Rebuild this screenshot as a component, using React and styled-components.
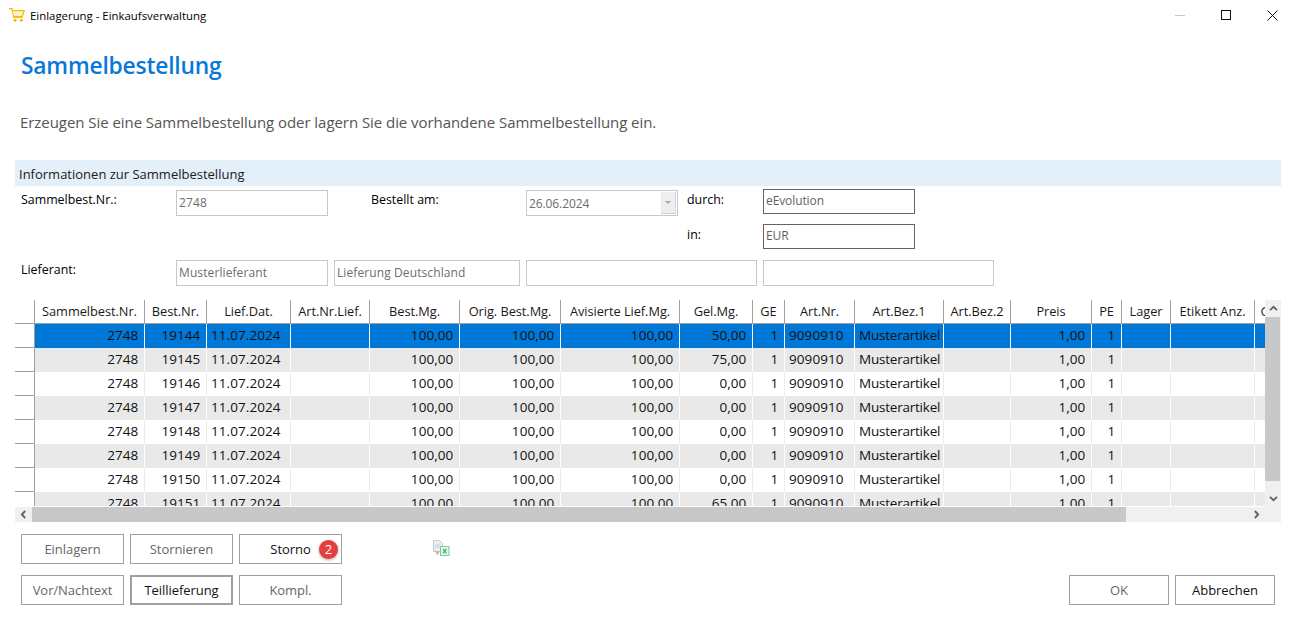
import React from 'react';
import styled, { createGlobalStyle, css } from 'styled-components';

const Global = createGlobalStyle`
  html, body { margin: 0; padding: 0; background: #fff; }
  body { font-family: "Open Sans", "Noto Sans", "Liberation Sans", sans-serif; color: #000; }
  * { box-sizing: border-box; }
`;

const Page = styled.div`
  width: 1296px; height: 628px; overflow: hidden; background: #fff;
  display: flex; flex-direction: column;
`;
const TitleBar = styled.header`
  height: 32px; flex: none; display: flex; align-items: center; padding-left: 9px;
`;
const CartIcon = styled.svg` width: 16px; height: 14px; margin-right: 5px; margin-top: -2px; flex: none; `;
const WindowTitle = styled.span` font-size: 11.4px; line-height: 14px; flex: 1; `;
const WinButton = styled.button`
  width: 46px; height: 30px; border: 0; padding: 0; background: none;
  display: flex; align-items: center; justify-content: center;
`;
const WinButtons = styled.div` display: flex; margin: -2px 1px 0 0; `;

const Heading = styled.h1`
  margin: 18px 0 0 21px; font-size: 22.8px; line-height: 32px; font-weight: 600; color: #0a78d6; letter-spacing: -0.2px;
`;
const Subtitle = styled.p`
  margin: 29px 0 0 20px; font-size: 15px; line-height: 22px; color: #555; letter-spacing: -0.055px;
`;
const Band = styled.div`
  margin: 27px 15px 0; height: 26px; background: #e3eff9; padding: 5px 0 0 4px;
  font-size: 13px; line-height: 18px; color: #1a1a1a;
`;
const Form = styled.div`
  margin: 3px 0 0 21px; display: grid;
  grid-template-columns: 155px 152px 6px 37px 149px 6px 152px 9px 70px 6px 152px 79px;
  grid-template-rows: 35px 36px 26px;
  font-size: 12.4px;
`;
const Label = styled.label`
  grid-column: ${p => p.$col}; grid-row: ${p => p.$row};
  line-height: 16px; white-space: nowrap; margin-top: ${p => p.$top ?? 3}px;
`;
const fieldBase = css`
  grid-column: ${p => p.$col} / span ${p => p.$span || 1}; grid-row: ${p => p.$row};
  display: flex; align-items: center; font-size: 12px; color: #6d6d6d; padding-left: 2px;
  white-space: nowrap; overflow: hidden;
`;
const Field = styled.div`
  ${fieldBase}
  height: 26px; border: 1px solid #c8c8c8; margin-top: ${p => p.$offset || 0}px; padding-bottom: 2px; letter-spacing: 0.1px;
`;
const DarkField = styled.div`
  ${fieldBase}
  height: 25px; border: 1px solid #646464; color: #5f5f5f; padding-bottom: 2px; letter-spacing: -0.1px;
`;
const DateField = styled(Field)` justify-content: space-between; padding: 1px 1px 1px 2px; letter-spacing: -0.1px; `;
const DropButton = styled.span`
  width: 15px; height: 22px; background: #eee; border-right: 1px solid #d8d8d8; border-bottom: 1px solid #d0d0d0;
  display: flex; align-items: center; justify-content: center; flex: none;
  &::after { content: ""; border: 3px solid transparent; border-top-color: #a8a8a8; border-bottom: 0; }
`;

const GridPanel = styled.section`
  margin: 14px 15px 0; height: 222px; display: grid;
  grid-template-columns: 1fr 16px; grid-template-rows: 207px 15px;
`;
const Viewport = styled.div` overflow: hidden; height: 206px; `;
const Row = styled.div`
  display: grid; width: max-content; height: 24px;
  grid-template-columns: 20px 110px 62px 84px 79px 90px 101px 119px 73px 32px 70px 89px 67px 81px 30px 49px 84px 60px;
  background: ${p => p.$selected ? '#0078d7' : p.$alt ? '#e9e9e9' : '#fff'};
`;
const HeadCell = styled.div`
  border-right: 1px solid #a0a0a0; border-bottom: 1px solid #a0a0a0; text-align: center;
  font-size: 12.8px; letter-spacing: -0.05px;
  line-height: 22px; white-space: nowrap; overflow: hidden; color: #1a1a1a;
`;
const Corner = styled.div` border-right: 1px solid #a0a0a0; border-bottom: 1px solid #a0a0a0; `;
const RowHead = styled.div`
  background: #fff; border-right: 1px solid #a0a0a0; border-bottom: 1px solid #a0a0a0;
`;
const Cell = styled.div`
  border-right: 1px solid ${p => p.$selected || p.$alt ? '#fff' : '#ebebeb'};
  text-align: ${p => p.$left ? 'left' : 'right'};
  font-size: 13.5px; letter-spacing: ${p => p.$word ? '-0.22px' : '0.08px'};
  padding: 0 ${p => p.$left ? 0 : 5.6}px 0 ${p => p.$left ? 4 : 0}px;
  line-height: 23px; white-space: nowrap; overflow: hidden; color: #111;
`;
const VBar = styled.div`
  background: #f0f0f0; display: grid; grid-template-rows: 17px 172px 1fr; justify-items: center; align-items: center;
`;
const VThumb = styled.div` width: 15px; height: 164px; background: #c8c8c8; justify-self: start; align-self: start; `;
const HBar = styled.div`
  background: #f0f0f0; display: grid; grid-template-columns: 17px 1094px 1fr 18px; align-items: center; justify-items: center;
`;
const ScrollCorner = styled.div` background: #f0f0f0; `;
const HThumb = styled.div` width: 1094px; height: 15px; background: #c8c8c8; `;
const Chevron = styled.svg` width: 9px; height: 9px; display: block; transform: rotate(${p => p.$turn}deg); `;

const Footer = styled.footer`
  padding: 12px 21px 0; display: flex; flex-direction: column; gap: 11px;
`;
const ButtonRow = styled.div` display: flex; gap: 6px; align-items: center; `;
const Button = styled.button`
  position: relative; width: ${p => p.$wide ? 100 : 103}px; height: 30px; background: #fff; padding: 0;
  border: ${p => p.$focus ? '2px solid #a0a0a0' : '1px solid #a0a0a0'};
  color: ${p => p.$active ? '#111' : '#666'};
  font: 13px "Open Sans", "Noto Sans", sans-serif; letter-spacing: -0.05px;
`;
const Badge = styled.span`
  position: absolute; left: 79px; top: 5px; width: 19px; height: 19px; border-radius: 50%;
  background: #e53e3e; color: #fff; font-size: 13px; line-height: 18px; text-align: center;
  box-shadow: 0 1px 3px rgba(0,0,0,.35);
`;
const ExcelIcon = styled.svg` width: 18px; height: 18px; margin-left: 84px; margin-top: -2px; flex: none; `;
const Spacer = styled.div` flex: 1; `;

const headers = ['Sammelbest.Nr.','Best.Nr.','Lief.Dat.','Art.Nr.Lief.','Best.Mg.','Orig. Best.Mg.','Avisierte Lief.Mg.','Gel.Mg.','GE','Art.Nr.','Art.Bez.1','Art.Bez.2','Preis','PE','Lager','Etikett Anz.','Gewicht'];
const received = ['50,00','75,00','0,00','0,00','0,00','0,00','0,00','65,00'];
const rows = received.map((gel, i) => ({
  id: 19144 + i,
  cells: [
    { t: '2748' }, { t: String(19144 + i) }, { t: '11.07.2024', left: true }, { t: '' }, { t: '100,00' }, { t: '100,00' }, { t: '100,00' }, { t: gel }, { t: '1' },
    { t: '9090910', left: true }, { t: 'Musterartikel', left: true, word: true }, { t: '' }, { t: '1,00' }, { t: '1' }, { t: '' }, { t: '' }, { t: '' },
  ],
}));

const ChevronUp = ({ turn }) => (
  <Chevron $turn={turn} viewBox="0 0 9 9"><path d="M1 6.2 4.5 2.8 8 6.2" fill="none" stroke="#606060" strokeWidth="1.8" /></Chevron>
);

export default function App() {
  return (
    <Page>
      <Global />
      <TitleBar>
        <CartIcon viewBox="0 0 16 14">
          <path d="M0 .8h3l1.8 8.4h8.6" fill="none" stroke="#fbb91e" strokeWidth="1.4" />
          <path d="M3.6 2.6h11.6l-2 6H5" fill="#fff3c4" stroke="#fbb91e" strokeWidth="1.3" />
          <circle cx="6" cy="12.2" r="1.5" fill="#f7b21a" /><circle cx="12.4" cy="12.2" r="1.5" fill="#f7b21a" />
        </CartIcon>
        <WindowTitle>Einlagerung - Einkaufsverwaltung</WindowTitle>
        <WinButtons>
          <WinButton aria-label="min"><svg width="10" height="10"><path d="M0 5.5h10" stroke="#c8c8c8" /></svg></WinButton>
          <WinButton aria-label="max"><svg width="10" height="10"><rect x=".5" y=".5" width="9" height="9" fill="none" stroke="#111" /></svg></WinButton>
          <WinButton aria-label="close"><svg width="11" height="11"><path d="M.5.5l10 10M10.5.5l-10 10" stroke="#111" /></svg></WinButton>
        </WinButtons>
      </TitleBar>
      <Heading>Sammelbestellung</Heading>
      <Subtitle>Erzeugen Sie eine Sammelbestellung oder lagern Sie die vorhandene Sammelbestellung ein.</Subtitle>
      <Band>Informationen zur Sammelbestellung</Band>
      <Form>
        <Label $col={1} $row={1}>Sammelbest.Nr.:</Label>
        <Field $col={2} $row={1} $offset={1}>2748</Field>
        <Label $col={5} $row={1}>Bestellt am:</Label>
        <DateField $col={7} $row={1} $offset={1}>26.06.2024<DropButton /></DateField>
        <Label $col={9} $row={1}>durch:</Label>
        <DarkField $col={11} $row={1}>eEvolution</DarkField>
        <Label $col={9} $row={2}>in:</Label>
        <DarkField $col={11} $row={2}>EUR</DarkField>
        <Label $col={1} $row={3} $top={2}>Lieferant:</Label>
        <Field $col={2} $row={3}>Musterlieferant</Field>
        <Field $col={4} $span={2} $row={3}>Lieferung Deutschland</Field>
        <Field $col={7} $span={3} $row={3} />
        <Field $col={11} $span={2} $row={3} />
      </Form>
      <GridPanel>
        <Viewport>
          <Row>
            <Corner />
            {headers.map(h => <HeadCell key={h}>{h}</HeadCell>)}
          </Row>
          {rows.map((r, i) => (
            <Row key={r.id} $selected={i === 0} $alt={i % 2 === 1}>
              <RowHead />
              {r.cells.map((c, n) => (
                <Cell key={n} $left={c.left} $word={c.word} $selected={i === 0} $alt={i % 2 === 1}>{c.t}</Cell>
              ))}
            </Row>
          ))}
        </Viewport>
        <VBar>
          <ChevronUp turn={0} />
          <VThumb />
          <ChevronUp turn={180} />
        </VBar>
        <HBar>
          <ChevronUp turn={-90} />
          <HThumb />
          <span />
          <ChevronUp turn={90} />
        </HBar>
        <ScrollCorner />
      </GridPanel>
      <Footer>
        <ButtonRow>
          <Button>Einlagern</Button>
          <Button>Stornieren</Button>
          <Button $active>Storno<Badge>2</Badge></Button>
          <ExcelIcon viewBox="0 0 18 18">
            <path d="M1.5 1.5h6l3 3v8h-9z" fill="#e9edf4" stroke="#c4c8d0" />
            <path d="M3 6h5M3 8h5" stroke="#bcd2ea" />
            <path d="M3.5 12l2 3 1.5-2.5" fill="none" stroke="#ee8fa2" strokeWidth="1.3" />
            <rect x="8.5" y="7.5" width="8.5" height="9" fill="#e4f7ea" stroke="#6fcf94" />
            <path d="M11 9.8l3.4 4.6M14.4 9.8L11 14.4" stroke="#3fa866" strokeWidth="1.1" />
          </ExcelIcon>
        </ButtonRow>
        <ButtonRow>
          <Button>Vor/Nachtext</Button>
          <Button $active $focus>Teillieferung</Button>
          <Button>Kompl.</Button>
          <Spacer />
          <Button $wide>OK</Button>
          <Button $wide $active>Abbrechen</Button>
        </ButtonRow>
      </Footer>
    </Page>
  );
}
